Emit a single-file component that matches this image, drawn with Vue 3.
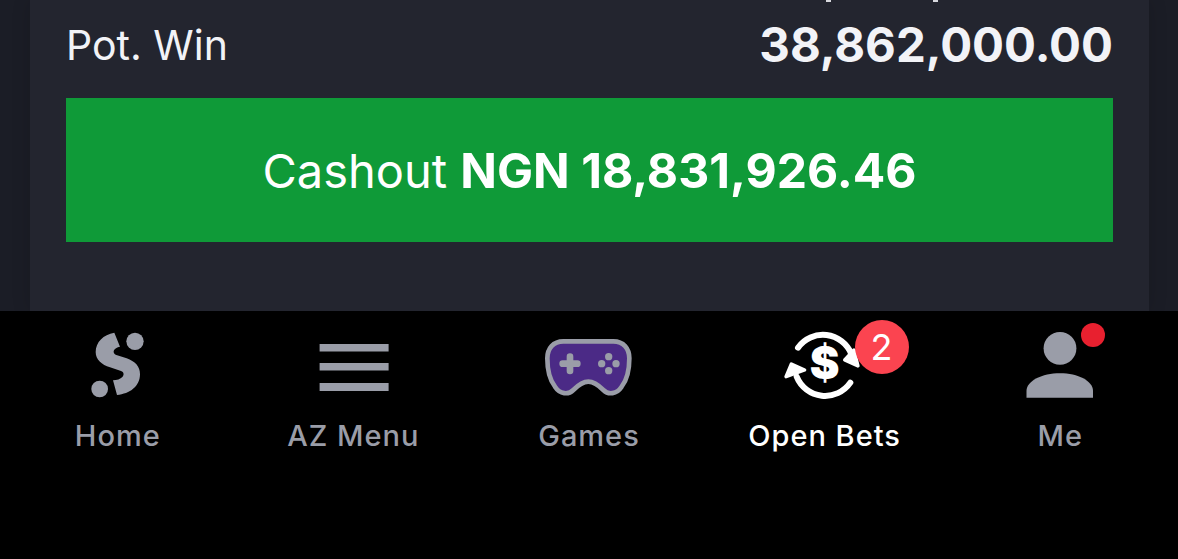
<script setup>
const tabs = [
  { key: 'home', label: 'Home' },
  { key: 'az', label: 'AZ Menu' },
  { key: 'games', label: 'Games' },
  { key: 'bets', label: 'Open Bets', active: true },
  { key: 'me', label: 'Me' },
]
</script>

<template>
  <div class="page">
    <main class="card">
      <div class="clip"><i class="sliver"></i><i class="sliver"></i></div>
      <div class="row">
        <span class="label">Pot. Win</span>
        <span class="value">38,862,000.00</span>
      </div>
      <button class="cashout">Cashout <b>NGN 18,831,926.46</b></button>
    </main>
    <nav class="tabbar">
      <div v-for="t in tabs" :key="t.key" class="tab" :class="{ active: t.active }">
        <div class="icon">
          <svg v-if="t.key === 'home'" width="66" height="100" viewBox="0 -39 198 300" fill="#9a9da8">
            <circle cx="150" cy="40" r="26"/>
            <circle cx="44" cy="183" r="25"/>
            <path d="M88 14C55 20 32 42 32 72C32 95 50 110 75 118L108 129C117 132 118 141 112 147C107 153 95 157 84 157L96 201C135 197 165 175 165 138C165 115 150 100 125 91L94 81C84 77 84 68 90 63C94 59 100 57 105 56Z"/>
          </svg>
          <svg v-else-if="t.key === 'az'" width="72" height="100" viewBox="0 0 72 100" fill="#9a9da8">
            <path d="M2.600 29h69v7.500h-69zM2.600 48h69v7.500h-69zM2.600 68h69v8h-69z"/>
          </svg>
          <svg v-else-if="t.key === 'games'" width="130" height="100" viewBox="12 0 390 300">
            <path d="M130 79H280C310 79 328 100 328 130C328 160 325 190 305 215C290 238 265 240 250 225C235 210 222 200 205 200C188 200 175 210 160 225C145 240 120 238 105 215C85 190 82 160 82 130C82 100 100 79 130 79Z" fill="#4b2a86" stroke="#9a9da8" stroke-width="14"/>
            <path d="M150 125V168M128 146H172" stroke="#9a9da8" stroke-width="20" stroke-linecap="round" fill="none"/>
            <g fill="#9a9da8">
              <circle cx="266" cy="125" r="11"/>
              <circle cx="266" cy="167" r="11"/>
              <circle cx="245" cy="146" r="11"/>
              <circle cx="288" cy="146" r="11"/>
            </g>
          </svg>
          <svg v-else-if="t.key === 'bets'" width="90" height="100" viewBox="4 -33 270 300">
            <g fill="none" stroke="#fff" stroke-width="18" stroke-linecap="round">
              <path d="M58 65A92 92 0 0 1 218 84"/>
              <path d="M54 152A92 92 0 0 0 215 170"/>
            </g>
            <g fill="#fff" stroke="#fff" stroke-width="10" stroke-linejoin="round">
              <path d="M238 120L198 102L226 72Z"/>
              <path d="M38 114L78 132L22 152Z"/>
            </g>
            <text x="138" y="158" text-anchor="middle" class="dollar">$</text>
          </svg>
          <svg v-else width="72" height="100" viewBox="0 0 72 100" fill="#9a9da8">
            <circle cx="36" cy="33.300" r="16.400"/>
            <path d="M2.500 82.700V76C2.500 66 18 58.300 36 58.300C54 58.300 69 66 69 76V82.700Z"/>
          </svg>
          <span v-if="t.key === 'bets'" class="badge">2</span>
          <span v-if="t.key === 'me'" class="dot"></span>
        </div>
        <span class="tab-label">{{ t.label }}</span>
      </div>
    </nav>
  </div>
</template>

<style>
html, body { margin: 0; background: #000; }
</style>

<style scoped>
.page {
  width: 1178px;
  height: 559px;
  display: flex;
  flex-direction: column;
  overflow: hidden;
  font-family: Inter, "Liberation Sans", sans-serif;
  background: #1b1d26;
}
.card {
  height: 311px;
  margin: 0 29px 0 30px;
  padding: 0 36px;
  background: #23252f;
  box-shadow: 0 0 18px rgba(0, 0, 0, 0.14);
  display: flex;
  flex-direction: column;
  box-sizing: border-box;
}
.clip {
  height: 2px;
  padding-left: 760px;
  display: flex;
  gap: 102px;
}
.sliver {
  width: 5px;
  height: 2px;
  background: #d8d9de;
}
.row {
  height: 96px;
  padding-bottom: 11px;
  box-sizing: border-box;
  display: flex;
  justify-content: space-between;
  align-items: center;
  color: #f2f3f7;
}
.label { font-size: 41px; font-weight: 400; }
.value { font-size: 47.400px; font-weight: 700; }
.cashout {
  height: 144px;
  border: 0;
  padding: 0;
  background: #0f9a38;
  color: #fff;
  font: 400 47px Inter, "Liberation Sans", sans-serif;
}
.cashout b { font-weight: 700; font-size: 48.100px; }
.tabbar {
  flex: 1;
  background: #000;
  display: grid;
  grid-template-columns: repeat(5, 1fr);
  align-items: start;
}
.tab {
  display: flex;
  flex-direction: column;
  align-items: center;
  color: #9a9da8;
}
.tab.active { color: #fff; }
.icon {
  position: relative;
  height: 100px;
  margin-top: 4px;
}
.icon svg { display: block; }
.tab-label {
  margin-top: 4px;
  font-size: 29px;
  letter-spacing: 1px;
  line-height: 34px;
  font-weight: 500;
}
.dollar { font: 900 134px Inter, sans-serif; fill: #fff; }
.badge {
  position: absolute;
  left: 75px;
  top: 5px;
  width: 54px;
  height: 54px;
  border-radius: 50%;
  background: #fb4450;
  color: #fff;
  font-size: 36px;
  font-weight: 400;
  display: flex;
  align-items: center;
  justify-content: center;
}
.dot {
  position: absolute;
  left: 57px;
  top: 8px;
  width: 24px;
  height: 24px;
  border-radius: 50%;
  background: #e8202f;
}
</style>
